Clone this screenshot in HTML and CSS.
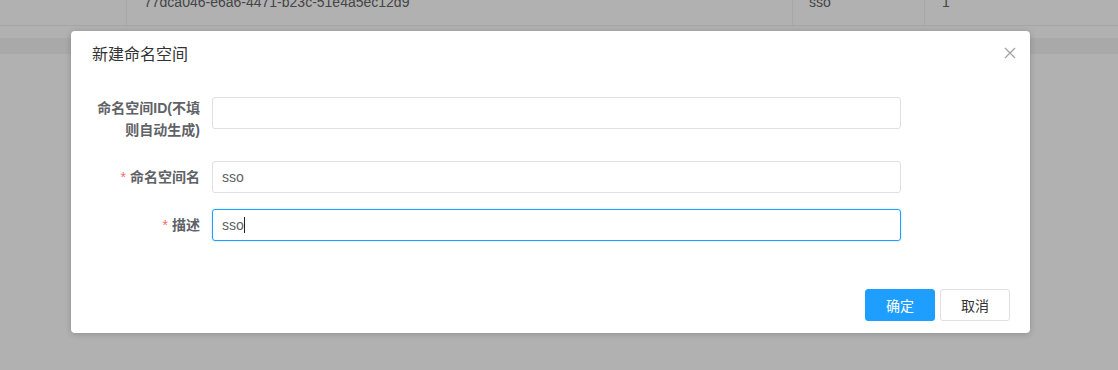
FILE: index.html
```html
<!DOCTYPE html>
<html lang="zh-CN">
<head>
    <meta charset="UTF-8">
    <title>新建命名空间</title>
    <link rel="stylesheet" href="styles.css">
</head>
<body>
    <div class="table">
        <div class="table-row">
            <div class="cell cell-blank"></div>
            <div class="cell cell-id">77dca046-e6a6-4471-b23c-51e4a5ec12d9</div>
            <div class="cell cell-name">sso</div>
            <div class="cell cell-count">1</div>
        </div>
    </div>
    <div class="table-band"></div>

    <div class="modal">
        <div class="modal-header">
            <span class="modal-title">新建命名空间</span>
            <svg class="modal-close" width="12" height="12" viewBox="0 0 12 12">
                <path d="M1 1L11 11M11 1L1 11" stroke="#a0a0a0" stroke-width="1.2" fill="none"/>
            </svg>
        </div>
        <form class="modal-body">
            <div class="form-item form-item-tall">
                <label class="form-label form-label-wrap" for="ns-id">命名空间ID(不填则自动生成)</label>
                <input type="text" id="ns-id" class="form-input">
            </div>
            <div class="form-item">
                <label class="form-label" for="ns-name"><span class="required">*</span>命名空间名</label>
                <input type="text" id="ns-name" class="form-input" value="sso">
            </div>
            <div class="form-item">
                <label class="form-label" for="ns-desc"><span class="required">*</span>描述</label>
                <div class="form-input form-input-focus">sso<span class="caret"></span></div>
            </div>
        </form>
        <div class="modal-footer">
            <button type="button" class="btn btn-primary">确定</button>
            <button type="button" class="btn btn-default">取消</button>
        </div>
    </div>
</body>
</html>
```

FILE: styles.css
```css
:root {
    --overlay-color: #b1b1b1;
    --primary-color: #1e9fff;
    --label-color: #606266;
    --border-color: #dcdfe6;
}
* {
    box-sizing: border-box;
}
body {
    margin: 0;
    height: 370px;
    overflow: hidden;
    position: relative;
    background-color: var(--overlay-color);
    font-family: "Liberation Sans", "Noto Sans CJK SC", sans-serif;
    font-size: 14px;
}
.table {
    margin-top: -10px;
}
.table-row {
    display: flex;
    height: 36px;
    border-bottom: 1px solid #a5a5a5;
}
.cell {
    line-height: 25px;
    color: #434547;
    font-size: 14px;
}
.cell-blank {
    width: 126px;
}
.cell-id {
    width: 666px;
    padding-left: 17px;
    border-left: 1px solid #a7a7a7;
}
.cell-name {
    width: 132px;
    padding-left: 16px;
    border-left: 1px solid #a7a7a7;
}
.cell-count {
    flex: 1;
    padding-left: 17px;
    border-left: 1px solid #a7a7a7;
}
.table-band {
    margin-top: 12px;
    height: 16px;
    background-color: #a9a9a9;
}
.modal {
    position: absolute;
    left: 71px;
    top: 31px;
    width: 959px;
    height: 302px;
    background-color: #fff;
    border-radius: 4px;
    box-shadow: 0 1px 6px rgba(0, 0, 0, 0.2);
}
.modal-header {
    display: flex;
    align-items: center;
    justify-content: space-between;
    height: 44px;
    padding: 0 14px 0 21px;
}
.modal-title {
    font-size: 16px;
    color: #333;
}
.modal-body {
    padding: 22px 129px 0 21px;
}
.form-item {
    display: flex;
    align-items: flex-start;
    margin-bottom: 16px;
}
.form-item-tall {
    margin-bottom: 20px;
}
.form-label {
    width: 120px;
    flex-shrink: 0;
    padding-right: 12px;
    text-align: right;
    font-weight: bold;
    color: var(--label-color);
    line-height: 32px;
}
.form-label-wrap {
    line-height: 22px;
    padding-left: 2px;
}
.required {
    color: #f56c6c;
    margin-right: 4px;
    font-weight: normal;
}
.form-input {
    flex: 1;
    height: 32px;
    padding: 0 9px;
    border: 1px solid var(--border-color);
    border-radius: 3px;
    font-family: inherit;
    font-size: 14px;
    color: var(--label-color);
    line-height: 30px;
    outline: none;
}
.form-input-focus {
    border-color: var(--primary-color);
    box-shadow: 0 0 2px rgba(30, 159, 255, 0.4);
}
.caret {
    display: inline-block;
    width: 1px;
    height: 16px;
    background-color: #222;
    vertical-align: -3px;
}
.modal-footer {
    position: absolute;
    right: 20px;
    bottom: 12px;
    display: flex;
    gap: 5px;
}
.btn {
    width: 70px;
    height: 32px;
    border-radius: 3px;
    font-family: inherit;
    font-size: 14px;
    cursor: pointer;
}
.btn-primary {
    background-color: var(--primary-color);
    color: #fff;
    border: 1px solid var(--primary-color);
}
.btn-default {
    background-color: #fff;
    color: #333;
    border: 1px solid var(--border-color);
}
```
